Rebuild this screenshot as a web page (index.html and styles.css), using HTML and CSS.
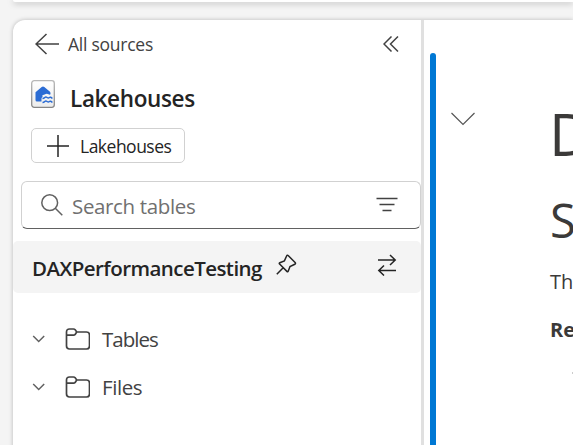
FILE: index.html
```html
<!DOCTYPE html>
<html lang="en">
<head>
<meta charset="utf-8">
<title>Lakehouses</title>
<link rel="stylesheet" href="styles.css">
</head>
<body>
<header class="ribbon"></header>
<main class="workspace">
  <aside class="explorer">
    <div class="back-row">
      <svg class="back-icon" width="25" height="22" viewBox="0 0 25 22"><path d="M11.500 1 1 11l10.500 10M1 11h23"/></svg>
      <span class="back-label">All sources</span>
      <svg class="collapse-icon" width="16" height="16" viewBox="0 0 16 16"><path d="M8.500 .5 1 8l7.500 7.500M15 .5 7.500 8l7.500 7.500"/></svg>
    </div>
    <div class="title-row">
      <svg class="lakehouse-icon" width="24" height="28" viewBox="0 0 24 28">
        <defs><linearGradient id="sheet" x2="0" y2="1"><stop offset="0" stop-color="#fff"/><stop offset="1" stop-color="#ececec"/></linearGradient>
        <linearGradient id="edge" x2="0" y2="1"><stop offset="0" stop-color="#b8b8b8"/><stop offset="1" stop-color="#858585"/></linearGradient></defs>
        <rect x=".7" y=".7" width="22.600" height="26.600" rx="2.500" fill="url(#sheet)" stroke="url(#edge)" stroke-width="1.300"/>
        <path fill="#2b6cd4" d="M4.500 12.200 10.700 7Q12 6 13.300 7l5.400 4.600q.8.700.8 1.900v.8q-1 .7-2 0-1.700-1.300-3.400 0-1 .8-2.600.7v2q-1 .5-1 1.500v2.900H6q-1.500 0-1.500-1.500Z"/>
        <g fill="none" stroke="#2b6cd4" stroke-width="1.500"><path d="M11.500 18.500q1.300 0 2.300-1t2.300 0 2.300 0 3 1"/><path d="M11.500 22.500q1.300 0 2.300-1t2.300 0 2.300 0 3 1"/></g>
      </svg>
      <h1 class="title">Lakehouses</h1>
    </div>
    <button class="add-button">
      <svg width="22" height="22" viewBox="0 0 22 22"><path d="M11 0v22M0 11h22"/></svg>
      <span class="add-label">Lakehouses</span>
    </button>
    <div class="search">
      <svg width="22" height="22" viewBox="0 0 22 22"><circle cx="8.700" cy="8.700" r="7.900"/><path d="m14.300 14.300 7 7"/></svg>
      <span class="search-label">Search tables</span>
      <svg class="filter-icon" width="22" height="15" viewBox="0 0 22 15"><path d="M.5 1.500h21M3.500 7.500h15M6.500 13.500h9"/></svg>
    </div>
    <div class="source">
      <span class="source-name">DAXPerformanceTesting</span>
      <svg class="pin-icon" width="21" height="21" viewBox="0 0 21 21"><path d="m12.400 1.700 6.700 6.700q1 1.100-.3 1.900l-4.800 2.300-1.800 4.600q-.5 1-1.300.2L3.600 10.100q-.8-.9.200-1.300l4.600-1.900 2.200-4.900q.7-1.300 1.800-.3ZM7.200 13.700.8 20.200"/></svg>
      <svg class="swap-icon" width="20" height="22" viewBox="0 0 20 22"><path d="M1 6h17M13 1l5.200 5-5.200 5M19 16.500H2M7 11.500l-5.200 5 5.200 5"/></svg>
    </div>
    <ul class="tree">
      <li class="node">
        <svg class="chevron" width="13" height="8" viewBox="0 0 13 8"><path d="m1.200 1 5.500 5.500L12.200 1"/></svg>
        <svg class="folder" width="25" height="22" viewBox="0 0 25 22"><path d="M4.500 1h4q1 0 1.700.8l1.500 2.200H21.500q3 0 3 3v11q0 3-3 3h-17q-3 0-3-3V4q0-3 3-3ZM1.500 7.200H8.500q1 0 1.700-.8L11.700 4"/></svg>
        <span class="node-label">Tables</span>
      </li>
      <li class="node">
        <svg class="chevron" width="13" height="8" viewBox="0 0 13 8"><path d="m1.200 1 5.500 5.500L12.200 1"/></svg>
        <svg class="folder" width="25" height="22" viewBox="0 0 25 22"><path d="M4.500 1h4q1 0 1.700.8l1.500 2.200H21.500q3 0 3 3v11q0 3-3 3h-17q-3 0-3-3V4q0-3 3-3ZM1.500 7.200H8.500q1 0 1.700-.8L11.700 4"/></svg>
        <span class="node-label node-label-files">Files</span>
      </li>
    </ul>
  </aside>
  <section class="notebook">
    <div class="cell-bar"></div>
    <svg class="cell-toggle" width="25" height="14" viewBox="0 0 25 14"><path d="m1.500 1 11.500 11.500L24.500 1"/></svg>
    <article class="markdown">
      <div class="heading-large">D</div>
      <div class="heading-medium">S</div>
      <div class="paragraph">Th</div>
      <div class="strong">Re</div>
      <div class="bullet"></div>
    </article>
  </section>
</main>
</body>
</html>
```
FILE: styles.css
```css
* { box-sizing: border-box; }
body {
  margin: 0;
  height: 445px;
  overflow: hidden;
  background: #f4f4f4;
  color: #242424;
  font-family: "Open Sans", "Noto Sans", sans-serif;
}
svg { display: block; flex: none; fill: none; stroke: #424242; stroke-width: 1.5; }
span, h1 { white-space: nowrap; }
.ribbon {
  height: 2px;
  margin-left: 13px;
  border-bottom-left-radius: 10px;
  background: #fff;
  box-shadow: 0 1px 6px rgba(0, 0, 0, .4);
}
.workspace {
  display: flex;
  height: 440px;
  margin: 18px 0 0 13px;
  border-top-left-radius: 12px;
  background: #fff;
  box-shadow: 0 0 4px rgba(0, 0, 0, .25);
}
.explorer { width: 411px; border-right: 3px solid #e0e0e0; flex: none; }
.back-row { display: flex; align-items: center; height: 22px; margin: 13px 22px 0; }
.back-label { margin-left: 8px; font-size: 17.5px; color: #424242; letter-spacing: -.25px; }
.collapse-icon { margin-left: auto; }
.title-row { display: flex; align-items: center; height: 28px; margin: 25px 0 0 18px; }
.lakehouse-icon { stroke: none; }
.title { margin: 9px 0 0 15px; font-size: 22.5px; font-weight: 600; line-height: 28px; letter-spacing: -.35px; }
.add-button {
  display: flex;
  align-items: center;
  width: 154px;
  height: 35px;
  margin: 20px 0 0 18px;
  padding: 0 0 0 15px;
  border: 1px solid #d1d1d1;
  border-radius: 5px;
  background: #fff;
  color: #242424;
  font: 17.5px "Open Sans", sans-serif;
}
.add-button svg { stroke: #242424; }
.add-label { margin: 1px 0 0 11px; letter-spacing: -.5px; }
.search {
  display: flex;
  align-items: center;
  height: 48px;
  width: 400px;
  margin: 18px 0 0 8px;
  padding: 0 22px 0 19px;
  border: 1px solid #d1d1d1;
  border-bottom-color: #616161;
  border-radius: 6px;
}
.search svg { stroke: #616161; }
.search-label { margin: 1px 0 0 9px; font-size: 20.5px; color: #707070; letter-spacing: -.35px; }
.search .filter-icon { margin: -1px 0 0 auto; stroke: #424242; }
.source {
  display: flex;
  align-items: center;
  height: 52px;
  margin-top: 12px;
  padding: 0 24px 0 19px;
  border-radius: 5px;
  background: #f4f4f4;
}
.source-name { margin-top: 1px; font-size: 20.5px; font-weight: 600; letter-spacing: -.55px; }
.source svg { stroke: #242424; }
.pin-icon { margin: -6px 0 0 14px; }
.source .swap-icon { margin: -5px 0 0 auto; }
.tree { margin: 22px 0 0 19px; padding: 0; list-style: none; }
.node { display: flex; align-items: center; height: 48px; }
.chevron { stroke: #616161; }
.folder { margin-left: 20px; stroke-width: 1.7; }
.node-label { margin: -1px 0 0 12px; font-size: 20.5px; color: #424242; letter-spacing: -1px; }
.node-label-files { letter-spacing: -.4px; }
.notebook { display: flex; align-items: flex-start; flex: 1; overflow: hidden; }
.cell-bar { width: 6px; height: 407px; margin: 33px 0 0 6px; border-radius: 3px 3px 0 0; background: #0078d4; flex: none; }
.cell-toggle { margin: 92px 0 0 14px; stroke: #555; stroke-width: 1.2; }
.markdown { width: 30px; margin: 76px 0 0 75px; flex: none; color: #3b3a39; }
.heading-large { margin-left: -1px; font-size: 59px; line-height: 74px; }
.heading-medium { margin-top: 20px; font-size: 47px; line-height: 60px; }
.paragraph { margin-top: 18px; font-size: 20px; line-height: 28px; }
.strong { margin-top: 20px; font-size: 20px; font-weight: 700; line-height: 28px; }
.bullet { width: 2px; height: 2px; margin: 28px 0 0 22px; background: #ccc; }
```
